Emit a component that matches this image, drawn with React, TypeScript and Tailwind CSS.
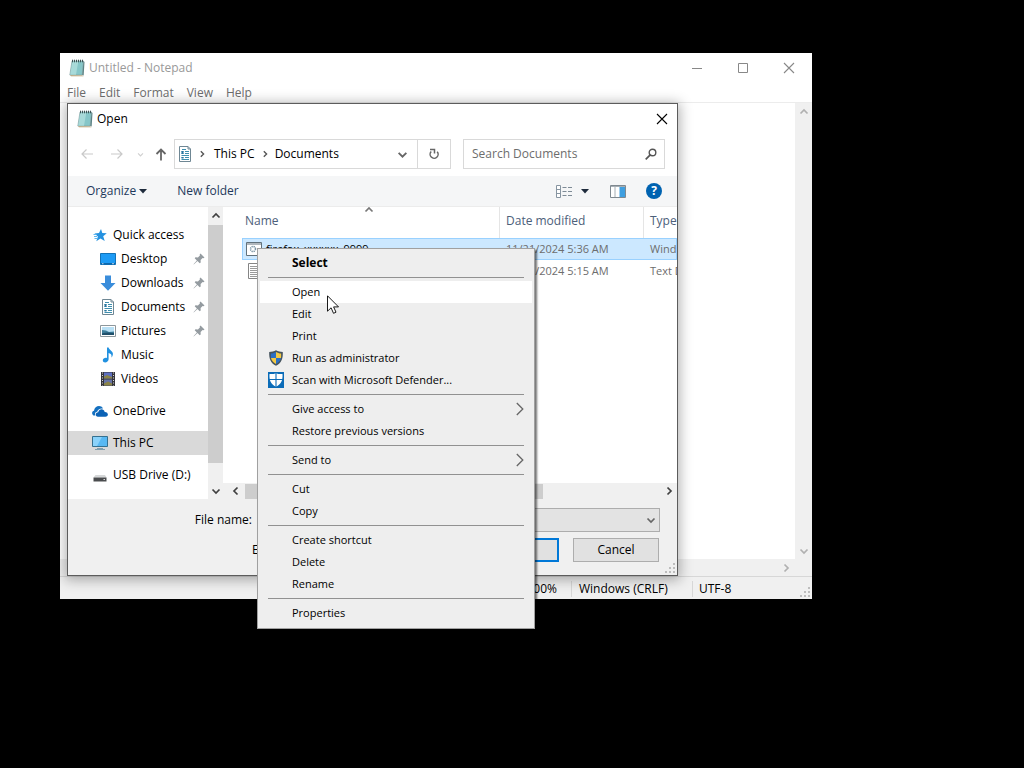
import React from "react";

type P = { className?: string };

function NotepadIcon({ className = "" }: P) {
  return (
    <svg viewBox="0 0 16 18" className={`h-[18px] w-4 shrink-0 ${className}`} aria-hidden="true">
      <path d="M3 2h11.500L13.200 16H.8z" fill="#86c6c8" stroke="#7d9a9c" strokeWidth=".6" />
      <path d="M3.300 2.500h6L7 15.700H1.200z" fill="#b7e2e0" opacity=".7" />
      <path d="M14.500 2l1 1-.8 13.500-1.500-.5z" fill="#5c8284" />
      <path d="M1 16.200l12.200.2 1.500.8H2z" fill="#b59a6a" />
      <path d="M3.500.7v2.600M5.500.7v2.600M7.500.7v2.600M9.500.7v2.600M11.500.7v2.600M13.500.7v2.600" stroke="#3f5557" strokeWidth="1" />
    </svg>
  );
}

function DocIcon() {
  return (
    <svg viewBox="0 0 16 16" className="size-4 shrink-0" aria-hidden="true">
      <path d="M2.500.5h8.500l2.500 2.500v12.500h-11z" fill="#fff" stroke="#6f8794" />
      <path d="M11 .5V3h2.500" fill="none" stroke="#6f8794" />
      <path d="M5 3.500h4M4.500 5.500h2M8 5.500h4M4.500 7.500h2M8 7.500h4M4.500 9.500h7.500M4.500 11.500h2M8 11.500h4M4.500 13.500h7.500" stroke="#3f8fae" />
      <path d="M4.500 5h2v3h-2zM4.500 11h2v1.500h-2z" fill="#2a76a0" />
    </svg>
  );
}

function StarIcon() {
  return (
    <svg viewBox="0 0 16 16" className="size-4 shrink-0" aria-hidden="true">
      <path d="M9 2l1.300 4 4.500.2-3.600 3 1.500 4.800-4.200-2.600-4.200 2.800 1.600-4.800-3.400-2.800 4.500-.5z" fill="#2592e0" />
      <path d="M1.500 7.500h3M2 9.500h3M2.500 11.500h3" stroke="#5fb7f0" />
    </svg>
  );
}

function DesktopIcon() {
  return (
    <svg viewBox="0 0 16 16" className="size-4 shrink-0" aria-hidden="true">
      <path d="M.5 2.500h15v11H.5z" fill="#1d9bf5" stroke="#1273b8" />
      <path d="M1 12h14v1.500H1z" fill="#0d68ad" />
      <path d="M2 12.700h1.500M12 12.700h2" stroke="#fff" strokeWidth=".7" />
    </svg>
  );
}

function DownloadIcon() {
  return (
    <svg viewBox="0 0 16 16" className="size-4 shrink-0" aria-hidden="true">
      <path d="M5 .5h6V8h4.500L8 15.700.500 8H5z" fill="#3a8ddb" />
    </svg>
  );
}

function PictureIcon() {
  return (
    <svg viewBox="0 0 16 16" className="size-4 shrink-0" aria-hidden="true">
      <path d="M.5 2.500h15v11H.5z" fill="#fff" stroke="#8d979c" />
      <path d="M2 4h12v8H2z" fill="#b9e0f5" />
      <path d="M2 7l4 .5 3 1.500 5-.5V12H2z" fill="#3f7f9c" />
      <path d="M2 10.500c4-1.500 8-1 12-.5V12H2z" fill="#20506b" />
    </svg>
  );
}

function MusicIcon() {
  return (
    <svg viewBox="0 0 16 16" className="size-4 shrink-0" aria-hidden="true">
      <path d="M7 .5h1.600c.3 2.600 4.600 3.300 4.300 6.700-.1 1.600-.8 2.500-1.600 3.300.8-2.800-.6-4-2.700-4.500v6.300c0 3.600-5.800 4.200-5.800 1.200 0-2.200 2.300-3.200 4.200-2.600z" fill="#2191e0" />
    </svg>
  );
}

function VideoIcon() {
  return (
    <svg viewBox="0 0 16 16" className="size-4 shrink-0" aria-hidden="true">
      <path d="M1 1h14v14H1z" fill="#34343a" />
      <path d="M4 1.500h8v6H4z" fill="#5d6fc0" />
      <path d="M4 8.500h8v6H4z" fill="#6673a8" />
      <path d="M4 5.500l3-1.500 5 2v1.500H4zM4 12.500l4-2 4 2v2H4z" fill="#8b8446" />
      <path d="M2.500 1.500v13M13.500 1.500v13" stroke="#d6d6d6" strokeWidth="1" strokeDasharray="1 1.500" />
    </svg>
  );
}

function CloudIcon() {
  return (
    <svg viewBox="0 0 16 16" className="size-4 shrink-0" aria-hidden="true">
      <path d="M1.500 12.500C-.6 11.300-.2 8 2 7.700 2.500 2.800 8.800 1.400 11 5.500 8 5 5.700 6.500 5.200 8.700 3 9 2.600 11 3.300 12.500z" fill="#1470c0" />
      <path d="M6 13.700c-3.200 0-3-4.400.2-4.400C7 5.400 12 5.400 12.700 8.900c3.800-.2 4.500 4.800.6 4.800z" fill="#0b62b5" />
    </svg>
  );
}

function PcIcon() {
  return (
    <svg viewBox="0 0 16 16" className="size-4 shrink-0" aria-hidden="true">
      <path d="M.5 1.500h15v10H.5z" fill="#58b8f2" stroke="#35708f" />
      <path d="M1 2h9L5 11H1z" fill="#8ad2fa" />
      <path d="M5 13.500h6M3 14.500h10" stroke="#7f9eae" />
    </svg>
  );
}

function DriveIcon() {
  return (
    <svg viewBox="0 0 16 16" className="size-4 shrink-0" aria-hidden="true">
      <path d="M3.500 8h9.500l1.500 2.500h-13z" fill="#d5d7d8" />
      <path d="M1.500 10.500h13v4h-13z" fill="#4a4c4e" />
      <path d="M11.500 12.500h1.500" stroke="#d8d8d8" />
    </svg>
  );
}

function PinIcon() {
  return (
    <svg viewBox="0 0 12 12" className="size-3 shrink-0" aria-hidden="true">
      <path d="M7.500.5l4 4-1 .8-.9-.2-2 2 .1 2.400-1 .8L4.500 8.100 1 11.300l-.5.2.2-.6L3.900 7.500 1.700 5.300l.8-1 2.400.1 2-2-.2-1z" fill="#949ba0" />
    </svg>
  );
}

function Chevron({ dir, className = "" }: P & { dir: "up" | "down" | "left" | "right" }) {
  const d = {
    up: "M1.500 6.500L5 3l3.500 3.500",
    down: "M1.500 3.500L5 7l3.500-3.500",
    left: "M6.500 1.500L3 5l3.500 3.500",
    right: "M3.500 1.500L7 5 3.500 8.500",
  }[dir];
  return (
    <svg viewBox="0 0 10 10" className={`shrink-0 ${className}`} aria-hidden="true">
      <path d={d} fill="none" stroke="currentColor" strokeWidth="1.700" />
    </svg>
  );
}

function Arrow({ dir }: { dir: "left" | "right" | "up" }) {
  const d = {
    left: "M13 7H2M6.500 2.500L2 7l4.500 4.500",
    right: "M1 7h11M7.500 2.500L12 7l-4.500 4.500",
    up: "M7 13.500V2.500M2.500 7L7 2.500 11.500 7",
  }[dir];
  return (
    <svg viewBox="0 0 14 14" className="size-[14px]" aria-hidden="true">
      <path d={d} fill="none" stroke="currentColor" strokeWidth={dir === "up" ? 1.8 : 1.2} />
    </svg>
  );
}

function Cross({ className = "" }: P) {
  return (
    <svg viewBox="0 0 12 12" className={`size-3 ${className}`} aria-hidden="true">
      <path d="M1 1l10 10M11 1L1 11" stroke="currentColor" strokeWidth="1.100" />
    </svg>
  );
}

function Triangle() {
  return (
    <svg viewBox="0 0 8 5" className="h-[5px] w-2" aria-hidden="true">
      <path d="M0 0h8L4 4.500z" fill="#1e2b3c" />
    </svg>
  );
}

function Grip() {
  return (
    <svg viewBox="0 0 10 10" className="size-[10px]" aria-hidden="true">
      <path d="M8 0h2v2H8zM8 4h2v2H8zM8 8h2v2H8zM4 4h2v2H4zM4 8h2v2H4zM0 8h2v2H0z" fill="#bdbdbd" />
    </svg>
  );
}

function ShieldIcon() {
  return (
    <svg viewBox="0 0 16 16" className="size-4" aria-hidden="true">
      <path d="M8 .3c2 1.200 4.300 1.700 6.800 1.700.3 6.500-1.300 11-6.800 13.800C2.500 13 .9 8.500 1.200 2 3.700 2 6 1.500 8 .3z" fill="#46545e" />
      <path d="M8 2V8H3c-.2-1.500-.2-3-.1-4.400C4.800 3.500 6.500 2.900 8 2zM8 8h5c-.6 2.600-2.100 4.300-5 5.900z" fill="#2c6fc4" />
      <path d="M8 2c1.500.9 3.200 1.500 5.100 1.600.1 1.400.1 2.900-.1 4.400H8zM8 8v5.900C5.100 12.300 3.600 10.600 3 8z" fill="#f3c944" />
    </svg>
  );
}

function DefenderIcon() {
  return (
    <svg viewBox="0 0 16 16" className="size-4" aria-hidden="true">
      <path d="M0 0h16v16H0z" fill="#0b6cb8" />
      <path d="M1.500 2C4 2.300 6 2 8 1.200c2 .8 4 1.100 6.500.8.400 6.300-1.300 10.200-6.500 12.800C2.800 12.200 1.100 8.300 1.500 2z" fill="#fff" />
      <path d="M8 1v14M1 7.500h14" stroke="#0b6cb8" strokeWidth="1.100" />
    </svg>
  );
}

const tree: { label: string; icon: React.ReactNode; nested?: boolean; pinned?: boolean; gap?: boolean; selected?: boolean }[] = [
  { label: "Quick access", icon: <StarIcon /> },
  { label: "Desktop", icon: <DesktopIcon />, nested: true, pinned: true },
  { label: "Downloads", icon: <DownloadIcon />, nested: true, pinned: true },
  { label: "Documents", icon: <DocIcon />, nested: true, pinned: true },
  { label: "Pictures", icon: <PictureIcon />, nested: true, pinned: true },
  { label: "Music", icon: <MusicIcon />, nested: true },
  { label: "Videos", icon: <VideoIcon />, nested: true },
  { label: "OneDrive", icon: <CloudIcon />, gap: true },
  { label: "This PC", icon: <PcIcon />, gap: true, selected: true },
  { label: "USB Drive (D:)", icon: <DriveIcon />, gap: true },
];

type Item = { label: string; icon?: React.ReactNode; bold?: boolean; hover?: boolean; sub?: boolean };

const groups: Item[][] = [
  [{ label: "Select", bold: true }],
  [
    { label: "Open", hover: true },
    { label: "Edit" },
    { label: "Print" },
    { label: "Run as administrator", icon: <ShieldIcon /> },
    { label: "Scan with Microsoft Defender...", icon: <DefenderIcon /> },
  ],
  [{ label: "Give access to", sub: true }, { label: "Restore previous versions" }],
  [{ label: "Send to", sub: true }],
  [{ label: "Cut" }, { label: "Copy" }],
  [{ label: "Create shortcut" }, { label: "Delete" }, { label: "Rename" }],
  [{ label: "Properties" }],
];

function ContextMenu() {
  return (
    <div
      role="menu"
      className="absolute left-[257px] top-[248px] z-20 min-w-[278px] border border-[#a0a0a0] bg-[#eeeeee] px-[2px] pb-1 pt-[3px] text-black shadow-[2px_2px_2px_rgba(0,0,0,0.55)]"
    >
      {groups.map((items, i) => (
        <div key={i} role="group">
          {i > 0 && <div role="separator" className="mx-2 my-[3px] h-px bg-[#919191]" />}
          {items.map((it) => (
            <button
              key={it.label}
              role="menuitem"
              className={`flex h-[22px] w-full items-center pl-2 pr-1 text-left ${it.hover ? "bg-white" : ""} ${it.bold ? "text-[12px] font-bold" : "text-[11px]"}`}
            >
              <span className="mr-2 flex w-4 shrink-0">{it.icon}</span>
              <span className="grow whitespace-nowrap">{it.label}</span>
              {it.sub && (
                <svg viewBox="0 0 8 14" className="mr-1 h-[14px] w-2" aria-hidden="true">
                  <path d="M.8 1l6 6-6 6" fill="none" stroke="#666" strokeWidth="1.300" />
                </svg>
              )}
            </button>
          ))}
        </div>
      ))}
    </div>
  );
}

function NavigationPane() {
  return (
    <nav className="flex w-[155px] shrink-0 bg-white" aria-label="Folders">
      <ul className="grow pt-4">
        {tree.map((n) => (
          <li key={n.label} className={n.gap ? "mt-2" : ""}>
            <a
              href="#"
              className={`flex h-6 items-center gap-[5px] whitespace-nowrap pr-[3px] ${n.nested ? "pl-8" : "pl-6"} ${n.selected ? "bg-[#d9d9d9]" : ""}`}
            >
              {n.icon}
              <span className="grow">{n.label}</span>
              {n.pinned && <PinIcon />}
            </a>
          </li>
        ))}
      </ul>
      <div className="flex w-[15px] flex-col items-center bg-[#f0f0f0] text-[#404040]">
        <Chevron dir="up" className="my-1 size-[10px]" />
        <div className="mb-[23px] w-full grow bg-[#cdcdcd]" />
        <Chevron dir="down" className="mb-[3px] size-[10px]" />
      </div>
    </nav>
  );
}

function FileList() {
  return (
    <div className="flex min-w-0 grow flex-col bg-white">
      <div className="relative min-h-0 grow overflow-hidden pl-[19px]">
        <Chevron dir="up" className="absolute left-[141px] top-[-2px] size-[10px] text-[#777]" />
        <table className="w-full table-fixed border-separate border-spacing-0 text-left">
          <colgroup>
            <col className="w-[257px]" />
            <col className="w-[144px]" />
            <col />
          </colgroup>
          <thead>
            <tr className="h-[31px] text-[#4c607a]">
              <th className="pb-1 pl-[3px] font-normal">Name</th>
              <th className="border-l border-[#e5e5e5] pb-1 pl-[6px] font-normal">Date modified</th>
              <th className="border-l border-[#e5e5e5] pb-1 pl-[6px] font-normal">Type</th>
            </tr>
          </thead>
          <tbody className="text-[11px] text-[#6d6d6d]">
            <tr className="h-[22px] bg-[#cce8ff] outline outline-1 -outline-offset-1 outline-[#99d1ff]">
              <td className="text-black">
                <span className="flex items-center gap-1 pl-1">
                  <svg viewBox="0 0 16 16" className="size-4" aria-hidden="true">
                    <path d="M.5 1.500h15v13H.5z" fill="#fff" stroke="#60717c" />
                    <path d="M1 3h14" stroke="#60717c" />
                    <circle cx="7" cy="8" r="2.500" fill="none" stroke="#7b95a5" strokeWidth="1.500" strokeDasharray="1.300 .7" />
                  </svg>
                  firefox_xxxxxx_9999
                </span>
              </td>
              <td className="pl-[7px]">11/21/2024 5:36 AM</td>
              <td className="overflow-hidden whitespace-nowrap pl-[7px]">Windows Batch File</td>
            </tr>
            <tr className="h-[22px]">
              <td>
                <svg viewBox="0 0 16 16" className="ml-1 size-4" aria-hidden="true">
                  <path d="M2.500.5h11v15h-11z" fill="#fff" stroke="#858585" />
                  <path d="M4 3.500h8M4 5.500h8M4 7.500h8M4 9.500h8M4 11.500h8M4 13.500h8" stroke="#9a9a9a" />
                </svg>
              </td>
              <td className="pl-[7px]">11/21/2024 5:15 AM</td>
              <td className="overflow-hidden whitespace-nowrap pl-[7px]">Text Document</td>
            </tr>
          </tbody>
        </table>
      </div>
      <div className="flex h-4 items-center bg-[#f0f0f0] pl-2 pr-[3px] text-[#404040]">
        <Chevron dir="left" className="mr-1 size-[10px]" />
        <div className="mr-[121px] h-[15px] grow bg-[#cdcdcd]" />
        <Chevron dir="right" className="size-[10px]" />
      </div>
    </div>
  );
}

function OpenDialog() {
  return (
    <section
      role="dialog"
      aria-label="Open"
      className="absolute left-[7px] right-[134px] top-[50px] z-10 min-w-[560px] border border-[#5c5c5c] bg-white text-black shadow-[0_2px_12px_2px_rgba(0,0,0,0.3)]"
    >
      <header className="flex h-[30px] items-center px-[9px]">
        <NotepadIcon />
        <h2 className="ml-1 grow">Open</h2>
        <button aria-label="Close">
          <Cross />
        </button>
      </header>

      <div className="flex h-[42px] items-center px-3 pb-[2px]">
        <div className="flex grow basis-0 items-center">
          <button aria-label="Back" className="mr-4 text-[#c9c9c9]"><Arrow dir="left" /></button>
          <button aria-label="Forward" className="mr-[13px] text-[#c9c9c9]"><Arrow dir="right" /></button>
          <button aria-label="Recent locations" className="mr-[10px] text-[#d0d0d0]"><Chevron dir="down" className="size-[7px]" /></button>
          <button aria-label="Up" className="mr-[6px] text-[#666]"><Arrow dir="up" /></button>
          <div className="flex h-[30px] grow items-center border border-[#d9d9d9] pl-[2px]">
            <DocIcon />
            <Chevron dir="right" className="ml-[5px] mr-2 size-[8px] text-[#555]" />
            <a href="#">This PC</a>
            <Chevron dir="right" className="mx-[6px] size-[8px] text-[#555]" />
            <a href="#">Documents</a>
            <button aria-label="Previous locations" className="ml-auto mr-[9px] text-[#666]"><Chevron dir="down" className="size-[11px]" /></button>
            <button aria-label="Refresh" className="flex h-full w-[33px] items-center justify-center border-l border-[#d9d9d9] text-[#666]">
              <svg viewBox="0 0 12 12" className="size-3" aria-hidden="true">
                <path d="M3.200 3.500A4 4 0 1 0 9.200 3.700" fill="none" stroke="currentColor" strokeWidth="1.500" />
                <path d="M2 1.500h4.500v4" fill="none" stroke="currentColor" strokeWidth="1.500" />
              </svg>
            </button>
          </div>
        </div>
        <label className="ml-3 flex h-[30px] w-[202px] shrink-0 items-center border border-[#d9d9d9] pl-2 pr-[7px]">
          <input aria-label="Search" placeholder="Search Documents" className="min-w-0 grow bg-transparent outline-none placeholder:text-[#6d6d6d]" />
          <svg viewBox="0 0 12 12" className="size-3 text-[#555]" aria-hidden="true">
            <circle cx="7.500" cy="4.500" r="3.300" fill="none" stroke="currentColor" strokeWidth="1.400" />
            <path d="M5.200 6.800L.7 11.300" stroke="currentColor" strokeWidth="1.700" />
          </svg>
        </label>
      </div>

      <div className="flex h-[31px] items-center border-b border-[#ececec] bg-[#f5f6f7] pl-[18px] pr-[15px] text-[#1e395b]">
        <button className="flex items-center gap-[3px]">Organize <Triangle /></button>
        <button className="ml-[30px]">New folder</button>
        <button aria-label="Change view" className="ml-auto flex items-center gap-2">
          <svg viewBox="0 0 17 13" className="h-[13px] w-[17px]" aria-hidden="true">
            <path d="M.5.5h4v12h-4zM.5 4.500h4M.5 8.500h4" fill="#fff" stroke="#8795a1" />
            <path d="M6.500 2.500h4M6.500 6.500h4M6.500 10.500h4M12 2.500h4M12 6.500h4M12 10.500h4" stroke="#7e8b96" />
          </svg>
          <Triangle />
        </button>
        <button aria-label="Preview pane" className="ml-[21px]">
          <svg viewBox="0 0 16 13" className="h-[13px] w-4" aria-hidden="true">
            <path d="M.5.5h15v12H.5z" fill="#fff" stroke="#7f8990" />
            <path d="M1 1.500h14M5 1v11" stroke="#a6aeb4" />
            <path d="M9.500 2h5.500v10H9.500z" fill="#3f9fe0" />
          </svg>
        </button>
        <button aria-label="Help" className="ml-5 flex size-4 items-center justify-center rounded-full bg-[#0063b1] text-[12px] font-bold text-white">?</button>
      </div>

      <div className="flex h-[292px]">
        <NavigationPane />
        <FileList />
      </div>

      <form className="relative bg-[#f0f0f0] pb-[13px] pr-[17px] pt-[9px]" onSubmit={(e) => e.preventDefault()}>
        <div className="flex items-center">
          <label htmlFor="file-name" className="w-[184px] shrink-0 text-right">File name:</label>
          <select id="file-name" className="ml-2 h-6 min-w-0 grow appearance-none border border-[#adadad] bg-[#e3e3e3]" />
          <Chevron dir="down" className="pointer-events-none -ml-[14px] mr-1 size-[10px] text-[#666]" />
        </div>
        <div className="mt-[6px] flex items-center pr-px">
          <label htmlFor="encoding" className="ml-[184px]">Encoding:</label>
          <select id="encoding" className="ml-2 h-6 min-w-0 grow appearance-none border border-[#adadad] bg-[#e3e3e3]" />
          <button className="ml-[10px] h-6 w-[86px] shrink-0 border-2 border-[#0078d7] bg-[#e1e1e1]">Open</button>
          <button type="button" className="ml-[14px] h-6 w-[86px] shrink-0 border border-[#adadad] bg-[#e1e1e1]">Cancel</button>
        </div>
        <span className="absolute bottom-[2px] right-[2px]"><Grip /></span>
      </form>
    </section>
  );
}

export default function App() {
  return (
    <main className="relative min-h-screen overflow-hidden bg-black font-['Open_Sans','Noto_Sans',sans-serif] text-[12px] leading-4">
      <section aria-label="Notepad" className="absolute bottom-[169px] left-[60px] right-[212px] top-[53px] flex min-h-[546px] min-w-[700px] flex-col bg-white">
        <header className="flex h-[30px] shrink-0 items-center pl-[9px] pr-[17px] text-[#999]">
          <NotepadIcon />
          <h1 className="ml-1 grow">Untitled - Notepad</h1>
          <div className="flex items-center gap-[34px] text-[#888]">
            <button aria-label="Minimize">
              <svg viewBox="0 0 12 12" className="size-3" aria-hidden="true"><path d="M1 6.500h10" stroke="currentColor" /></svg>
            </button>
            <button aria-label="Maximize">
              <svg viewBox="0 0 12 12" className="size-3" aria-hidden="true"><path d="M1.500 1.500h9v9h-9z" fill="none" stroke="currentColor" /></svg>
            </button>
            <button aria-label="Close"><Cross /></button>
          </div>
        </header>
        <div role="menubar" className="flex h-[19px] shrink-0 items-center gap-[13px] pl-[7px] text-[#6d6d6d]">
          <button role="menuitem">File</button>
          <button role="menuitem">Edit</button>
          <button role="menuitem">Format</button>
          <button role="menuitem">View</button>
          <button role="menuitem">Help</button>
        </div>
        <div className="flex min-h-0 grow border-t border-[#ececec]">
          <div className="flex grow flex-col">
            <textarea aria-label="Document text" className="w-full grow resize-none outline-none" />
            <div className="flex h-[17px] items-center justify-end bg-[#f0f0f0] pr-1 text-[#b0b0b0]"><Chevron dir="right" className="size-[10px]" /></div>
          </div>
          <div className="flex w-[17px] flex-col items-center justify-between bg-[#f0f0f0] pb-[20px] pt-1 text-[#b0b0b0]">
            <Chevron dir="up" className="size-[10px]" />
            <Chevron dir="down" className="size-[10px]" />
          </div>
        </div>
        <footer className="relative flex h-[23px] shrink-0 items-center justify-end border-t border-[#d7d7d7] bg-[#f0f0f0] pt-px text-black">
          <span className="pr-[14px]">100%</span>
          <span className="w-[121px] border-l border-[#d7d7d7] pl-[7px]">Windows (CRLF)</span>
          <span className="w-[120px] border-l border-[#d7d7d7] pl-[6px]">UTF-8</span>
          <span className="absolute bottom-[2px] right-[2px]"><Grip /></span>
        </footer>
        <OpenDialog />
      </section>
      <ContextMenu />
      <svg viewBox="0 0 12 19" className="absolute left-[327px] top-[295px] z-30 h-[19px] w-3" aria-hidden="true">
        <path d="M.5.8v15.400l3.600-3.400 2.400 5.500 2.500-1.100-2.400-5.300h4.900z" fill="#fff" stroke="#000" strokeWidth=".9" />
      </svg>
    </main>
  );
}
